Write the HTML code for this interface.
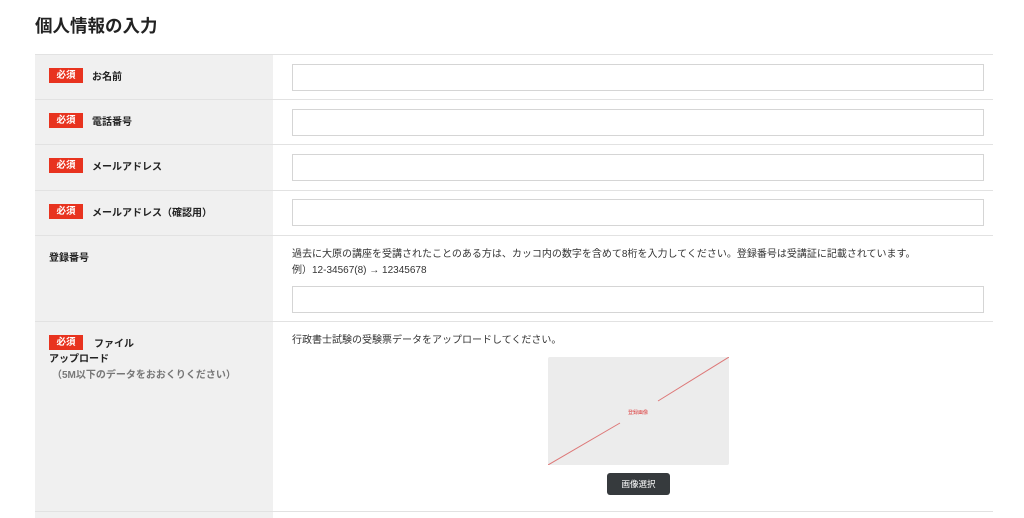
<!DOCTYPE html><html><head><meta charset="utf-8"><style>
body{margin:0;background:#fff;font-family:"Liberation Sans","Noto Sans CJK JP",sans-serif;color:#222;width:1024px;height:518px;overflow:hidden;position:relative}
.a{position:absolute}
h1{position:absolute;left:35px;top:13px;margin:0;font-size:17.5px;font-weight:bold;color:#222}
.left{left:35px;width:238px;background:#f0f0f0}
.line{left:35px;width:958px;height:1px;background:#e2e2e2}
.badge{background:#e8331f;color:#fff;font-size:9.5px;font-weight:bold;width:34px;height:15px;line-height:15px;text-align:center}
.lbl{font-size:10px;font-weight:bold;color:#222}
.inp{left:292px;width:690px;height:25px;border:1px solid #d5d5d5;background:#fff}
.t{font-size:10px;color:#333}
</style></head><body>
<h1>個人情報の入力</h1>
<div class="a left" style="top:54px;height:464px"></div>
<div class="a line" style="top:54px"></div>
<div class="a line" style="top:99px"></div>
<div class="a line" style="top:144px"></div>
<div class="a line" style="top:190px"></div>
<div class="a line" style="top:235px"></div>
<div class="a line" style="top:321px"></div>
<div class="a line" style="top:511px"></div>

<div class="a badge" style="left:49px;top:68px">必須</div><div class="a lbl" style="left:92px;top:68px">お名前</div>
<div class="a inp" style="top:64px"></div>
<div class="a badge" style="left:49px;top:113px">必須</div><div class="a lbl" style="left:92px;top:113px">電話番号</div>
<div class="a inp" style="top:109px"></div>
<div class="a badge" style="left:49px;top:158px">必須</div><div class="a lbl" style="left:92px;top:158px">メールアドレス</div>
<div class="a inp" style="top:154px"></div>
<div class="a badge" style="left:49px;top:204px">必須</div><div class="a lbl" style="left:92px;top:204px">メールアドレス（確認用）</div>
<div class="a inp" style="top:199px"></div>

<div class="a lbl" style="left:49px;top:249px">登録番号</div>
<div class="a t" style="left:292px;top:245px">過去に大原の講座を受講されたことのある方は、カッコ内の数字を含めて8桁を入力してください。登録番号は受講証に記載されています。</div>
<div class="a t" style="left:292px;top:261px">例）12-34567(8) → 12345678</div>
<div class="a inp" style="top:286px"></div>

<div class="a badge" style="left:49px;top:335px">必須</div><div class="a lbl" style="left:94px;top:335px">ファイル</div>
<div class="a lbl" style="left:49px;top:350px">アップロード</div>
<div class="a" style="left:52px;top:366px;font-size:10px;font-weight:bold;color:#777">（5M以下のデータをおおくりください）</div>
<div class="a t" style="left:292px;top:331px">行政書士試験の受験票データをアップロードしてください。</div>
<svg class="a" style="left:548px;top:357px" width="181" height="108"><rect width="181" height="108" rx="2" fill="#ececec"/><line x1="0" y1="108" x2="72" y2="66" stroke="#d77" stroke-width="1"/><line x1="110" y1="44" x2="181" y2="0" stroke="#d77" stroke-width="1"/><text x="90" y="57" font-size="5" fill="#d44" text-anchor="middle">登録画像</text></svg>
<div class="a" style="left:607px;top:473px;width:63px;height:22px;background:#363a3d;border-radius:3px;color:#fff;font-size:8.5px;line-height:22px;text-align:center">画像選択</div>
</body></html>
